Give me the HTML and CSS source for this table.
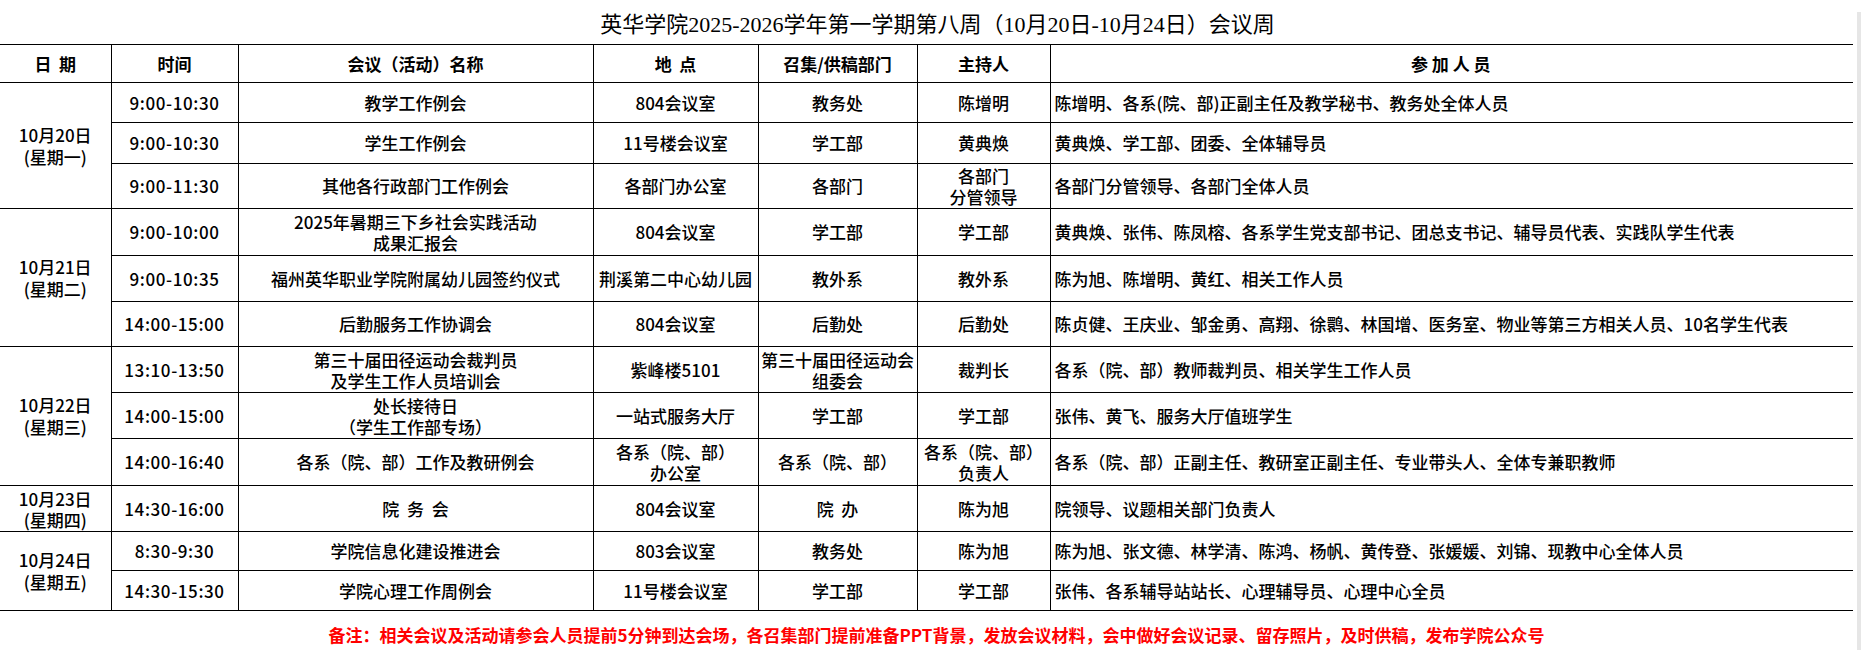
FILE: index.html
```html
<!DOCTYPE html>
<html lang="zh-CN">
<head>
<meta charset="utf-8">
<title>会议周</title>
<link rel="stylesheet" href="styles.css">
</head>
<body>
<div class="page">
  <h1 class="title">英华学院2025-2026学年第一学期第八周（10月20日-10月24日）会议周</h1>
  <table class="sched">
    <colgroup>
      <col class="c-date"><col class="c-time"><col class="c-name"><col class="c-loc"><col class="c-dept"><col class="c-host"><col class="c-ppl">
    </colgroup>
    <thead>
      <tr class="h38">
        <th class="date">日&nbsp;&nbsp;期</th>
        <th>时间</th>
        <th>会议（活动）名称</th>
        <th>地&nbsp;&nbsp;点</th>
        <th>召集/供稿部门</th>
        <th>主持人</th>
        <th class="ppl ctr">参&nbsp;加&nbsp;人&nbsp;员</th>
      </tr>
    </thead>
    <tbody>
      <tr class="h40">
        <td class="date" rowspan="3">10月20日<br>(星期一)</td>
        <td class="time">9:00-10:30</td>
        <td>教学工作例会</td>
        <td>804会议室</td>
        <td>教务处</td>
        <td>陈增明</td>
        <td class="ppl">陈增明、各系(院、部)正副主任及教学秘书、教务处全体人员</td>
      </tr>
      <tr class="h41">
        <td class="time">9:00-10:30</td>
        <td>学生工作例会</td>
        <td>11号楼会议室</td>
        <td>学工部</td>
        <td>黄典焕</td>
        <td class="ppl">黄典焕、学工部、团委、全体辅导员</td>
      </tr>
      <tr class="h45">
        <td class="time">9:00-11:30</td>
        <td>其他各行政部门工作例会</td>
        <td>各部门办公室</td>
        <td>各部门</td>
        <td class="two">各部门<br>分管领导</td>
        <td class="ppl">各部门分管领导、各部门全体人员</td>
      </tr>
      <tr class="h47">
        <td class="date" rowspan="3">10月21日<br>(星期二)</td>
        <td class="time">9:00-10:00</td>
        <td class="two">2025年暑期三下乡社会实践活动<br>成果汇报会</td>
        <td>804会议室</td>
        <td>学工部</td>
        <td>学工部</td>
        <td class="ppl">黄典焕、张伟、陈凤榕、各系学生党支部书记、团总支书记、辅导员代表、实践队学生代表</td>
      </tr>
      <tr class="h46">
        <td class="time">9:00-10:35</td>
        <td>福州英华职业学院附属幼儿园签约仪式</td>
        <td>荆溪第二中心幼儿园</td>
        <td>教外系</td>
        <td>教外系</td>
        <td class="ppl">陈为旭、陈增明、黄红、相关工作人员</td>
      </tr>
      <tr class="h45">
        <td class="time">14:00-15:00</td>
        <td>后勤服务工作协调会</td>
        <td>804会议室</td>
        <td>后勤处</td>
        <td>后勤处</td>
        <td class="ppl">陈贞健、王庆业、邹金勇、高翔、徐鹮、林国增、医务室、物业等第三方相关人员、10名学生代表</td>
      </tr>
      <tr class="h46">
        <td class="date" rowspan="3">10月22日<br>(星期三)</td>
        <td class="time">13:10-13:50</td>
        <td class="two">第三十届田径运动会裁判员<br>及学生工作人员培训会</td>
        <td>紫峰楼5101</td>
        <td class="two">第三十届田径运动会<br>组委会</td>
        <td>裁判长</td>
        <td class="ppl">各系（院、部）教师裁判员、相关学生工作人员</td>
      </tr>
      <tr class="h46">
        <td class="time">14:00-15:00</td>
        <td class="two">处长接待日<br>（学生工作部专场）</td>
        <td>一站式服务大厅</td>
        <td>学工部</td>
        <td>学工部</td>
        <td class="ppl">张伟、黄飞、服务大厅值班学生</td>
      </tr>
      <tr class="h47">
        <td class="time">14:00-16:40</td>
        <td>各系（院、部）工作及教研例会</td>
        <td class="two">各系（院、部）<br>办公室</td>
        <td>各系（院、部）</td>
        <td class="two">各系（院、部）<br>负责人</td>
        <td class="ppl">各系（院、部）正副主任、教研室正副主任、专业带头人、全体专兼职教师</td>
      </tr>
      <tr class="h46">
        <td class="date two">10月23日<br>(星期四)</td>
        <td class="time">14:30-16:00</td>
        <td>院&nbsp;&nbsp;务&nbsp;&nbsp;会</td>
        <td>804会议室</td>
        <td>院&nbsp;&nbsp;办</td>
        <td>陈为旭</td>
        <td class="ppl">院领导、议题相关部门负责人</td>
      </tr>
      <tr class="h39">
        <td class="date" rowspan="2">10月24日<br>(星期五)</td>
        <td class="time">8:30-9:30</td>
        <td>学院信息化建设推进会</td>
        <td>803会议室</td>
        <td>教务处</td>
        <td>陈为旭</td>
        <td class="ppl">陈为旭、张文德、林学清、陈鸿、杨帆、黄传登、张媛媛、刘锦、现教中心全体人员</td>
      </tr>
      <tr class="h40">
        <td class="time">14:30-15:30</td>
        <td>学院心理工作周例会</td>
        <td>11号楼会议室</td>
        <td>学工部</td>
        <td>学工部</td>
        <td class="ppl">张伟、各系辅导站站长、心理辅导员、心理中心全员</td>
      </tr>
    </tbody>
  </table>
  <p class="note">备注：相关会议及活动请参会人员提前5分钟到达会场，各召集部门提前准备PPT背景，发放会议材料，会中做好会议记录、留存照片，及时供稿，发布学院公众号</p>
  <div class="edge"></div>
</div>
</body>
</html>
```
FILE: styles.css
```css
html, body {
  margin: 0;
  padding: 0;
  background: #fff;
}
.page {
  position: relative;
  width: 1861px;
  height: 650px;
  overflow: hidden;
}
.title {
  margin: 0;
  height: 44px;
  padding-left: 22px;
  box-sizing: border-box;
  display: flex;
  align-items: center;
  justify-content: center;
  font-family: "Liberation Serif", "Noto Sans CJK SC", serif;
  font-weight: normal;
  font-size: 22px;
  color: #000;
  width: 1853px;
}
.sched {
  border-collapse: collapse;
  table-layout: fixed;
  width: 1853px;
  font-family: "Noto Sans CJK SC", sans-serif;
  font-size: 17px;
  font-weight: 500;
  color: #000;
}
.c-date { width: 111px; }
.c-time { width: 127px; }
.c-name { width: 355px; }
.c-loc { width: 165px; }
.c-dept { width: 159px; }
.c-host { width: 133px; }
.c-ppl { width: 803px; }
.sched th,
.sched td {
  border: 1px solid #000;
  padding: 0 2px;
  text-align: center;
  vertical-align: middle;
  line-height: 22px;
  white-space: nowrap;
  overflow: hidden;
}
.sched th {
  font-weight: 700;
}
.sched .date {
  border-left: none;
}
.sched .ppl {
  border-right: none;
  text-align: left;
  padding-left: 4px;
}
.sched .ppl.ctr {
  text-align: center;
  padding-left: 0;
}
.sched .time {
  font-size: 17px;
  letter-spacing: 0.6px;
}
.sched .two {
  line-height: 21px;
}
.h38 { height: 38px; }
.h39 { height: 39px; }
.h40 { height: 40px; }
.h41 { height: 41px; }
.h45 { height: 45px; }
.h46 { height: 46px; }
.h47 { height: 47px; }
.note {
  margin: 12px 0 0;
  width: 1853px;
  padding-left: 20px;
  box-sizing: border-box;
  text-align: center;
  font-family: "Noto Sans CJK SC", sans-serif;
  font-size: 17px;
  font-weight: 700;
  color: #ff0000;
  line-height: 24px;
}
.edge {
  position: absolute;
  right: 0;
  top: 12px;
  width: 4px;
  bottom: 0;
  background: #e6e6e6;
}
```
